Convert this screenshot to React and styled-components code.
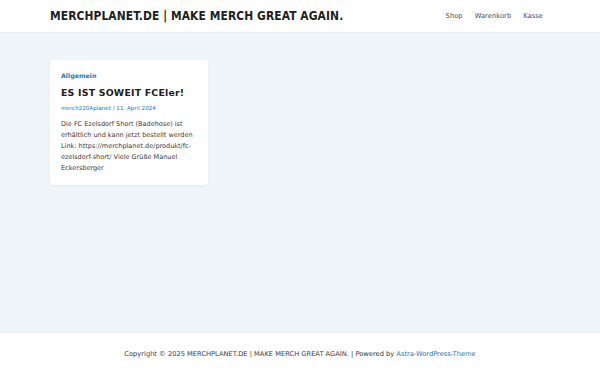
import React from "react"
import styled, { createGlobalStyle } from "styled-components"

const GlobalStyle = createGlobalStyle`
  html, body {
    margin: 0;
    padding: 0;
  }
  body {
    font-family: "DejaVu Sans", sans-serif;
    background: #f0f5fa;
  }
`

const Page = styled.div`
  min-height: 375px;
  display: flex;
  flex-direction: column;
`

const Header = styled.header`
  height: 33px;
  background: #ffffff;
  border-bottom: 1px solid #eaeef2;
  display: flex;
  align-items: center;
  justify-content: space-between;
  padding: 0 57px 0 50px;
  box-sizing: border-box;
`

const SiteTitle = styled.a`
  font-family: "DejaVu Sans Condensed", "DejaVu Sans", sans-serif;
  font-weight: bold;
  font-size: 11.9px;
  color: #212121;
  text-decoration: none;
  letter-spacing: 0.1px;
`

const Nav = styled.nav`
  display: flex;
  gap: 12px;
`

const NavLink = styled.a`
  font-size: 6.8px;
  color: #4b4f58;
  text-decoration: none;
`

const Main = styled.main`
  flex: 1;
  padding: 27px 50px;
`

const Card = styled.article`
  width: 158px;
  box-sizing: border-box;
  background: #ffffff;
  border-radius: 4px;
  box-shadow: 0 1px 3px rgba(0, 0, 0, 0.06);
  padding: 12px 11px 11px;
`

const Category = styled.a`
  display: block;
  font-size: 6.3px;
  font-weight: bold;
  color: #1e73be;
  text-decoration: none;
`

const Title = styled.h2`
  margin: 8px 0 0;
  font-size: 9.4px;
  font-weight: bold;
  color: #212121;
  letter-spacing: 0.2px;
`

const Meta = styled.div`
  margin-top: 7px;
  font-size: 5.6px;
  color: #1e73be;
`

const Excerpt = styled.p`
  margin: 8px 0 0;
  font-size: 6.5px;
  line-height: 11px;
  color: #3a3a3a;
`

const Footer = styled.footer`
  height: 42px;
  background: #ffffff;
  border-top: 1px solid #eaeef2;
  display: flex;
  align-items: center;
  justify-content: center;
`

const FooterText = styled.div`
  font-size: 6.7px;
  color: #3a3a3a;
`

const FooterLink = styled.a`
  color: #1e73be;
  text-decoration: none;
`

export default function App() {
  return (
    <Page>
      <GlobalStyle />
      <Header>
        <SiteTitle>MERCHPLANET.DE | MAKE MERCH GREAT AGAIN.</SiteTitle>
        <Nav>
          <NavLink>Shop</NavLink>
          <NavLink>Warenkorb</NavLink>
          <NavLink>Kasse</NavLink>
        </Nav>
      </Header>
      <Main>
        <Card>
          <Category>Allgemein</Category>
          <Title>ES IST SOWEIT FCEler!</Title>
          <Meta>merch220Aplanet / 11. April 2024</Meta>
          <Excerpt>
            Die FC Ezelsdorf Short (Badehose) ist erhältlich und kann jetzt
            bestellt werden Link: https://merchplanet.de/produkt/fc-ezelsdorf-short/
            Viele Grüße Manuel Eckersberger
          </Excerpt>
        </Card>
      </Main>
      <Footer>
        <FooterText>
          Copyright © 2025 MERCHPLANET.DE | MAKE MERCH GREAT AGAIN. | Powered by{" "}
          <FooterLink>Astra-WordPress-Theme</FooterLink>
        </FooterText>
      </Footer>
    </Page>
  )
}
